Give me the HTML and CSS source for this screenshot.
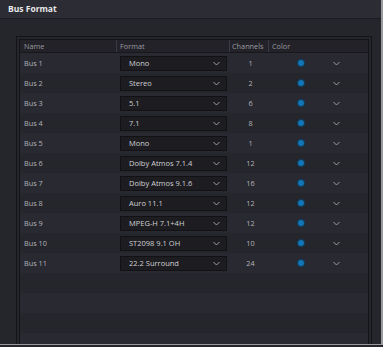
FILE: index.html
```html
<!DOCTYPE html>
<html lang="en">
<head>
    <meta charset="UTF-8">
    <title>Bus Format</title>
    <link rel="stylesheet" href="styles.css">
</head>
<body>
    <div class="window">
        <div class="title-bar">Bus Format</div>
        <div class="content">
            <div class="panel">
                <div class="table">
                    <div class="row header">
                        <div class="cell name">Name</div>
                        <div class="cell format">Format</div>
                        <div class="cell channels">Channels</div>
                        <div class="cell color">Color</div>
                    </div>
                    <div id="rows"></div>
                </div>
            </div>
        </div>
    </div>

    <script>
        const buses = [
            ['Bus 1', 'Mono', 1],
            ['Bus 2', 'Stereo', 2],
            ['Bus 3', '5.1', 6],
            ['Bus 4', '7.1', 8],
            ['Bus 5', 'Mono', 1],
            ['Bus 6', 'Dolby Atmos 7.1.4', 12],
            ['Bus 7', 'Dolby Atmos 9.1.6', 16],
            ['Bus 8', 'Auro 11.1', 12],
            ['Bus 9', 'MPEG-H 7.1+4H', 12],
            ['Bus 10', 'ST2098 9.1 OH', 10],
            ['Bus 11', '22.2 Surround', 24]
        ];

        const chevron = '<svg class="chev" width="7" height="5" viewBox="0 0 7 5"><path d="M0.5 1 L3.5 4 L6.5 1" fill="none" stroke="currentColor" stroke-width="1"/></svg>';

        const rows = document.getElementById('rows');
        let html = '';
        buses.forEach(([name, format, ch]) => {
            html += '<div class="row">' +
                '<div class="cell name">' + name + '</div>' +
                '<div class="cell format"><div class="select"><span>' + format + '</span>' + chevron + '</div></div>' +
                '<div class="cell channels">' + ch + '</div>' +
                '<div class="cell color"><span class="dot"></span></div>' +
                '<div class="cell more">' + chevron + '</div>' +
                '</div>';
        });
        for (let i = 0; i < 4; i++) {
            html += '<div class="row empty"></div>';
        }
        rows.innerHTML = html;
    </script>
</body>
</html>
```

FILE: styles.css
```css
body {
    margin: 0;
    background: #25252c;
    font-family: "Open Sans", "DejaVu Sans", sans-serif;
    color: #b4b4b8;
}

.window {
    display: flex;
    flex-direction: column;
    width: 381px;
    height: 344px;
    border-right: 2px solid #9a9a9e;
    border-bottom: 1px solid #9a9a9e;
    background: #25252c;
    overflow: hidden;
}

.title-bar {
    flex: none;
    height: 18px;
    line-height: 18px;
    padding-left: 8px;
    background: #2c2c34;
    border-bottom: 1px solid #1c1c20;
    color: #e8e8ea;
    font-size: 8.5px;
    font-weight: 700;
}

.content {
    flex: 1;
    display: flex;
    min-height: 0;
    padding: 17px 9px 0 16px;
}

.panel {
    flex: 1;
    display: flex;
    border: 1px solid #141418;
    border-bottom: none;
    padding: 2px 2px 0;
}

.table {
    flex: 1;
    border: 1px solid #141418;
    border-bottom: none;
    background: #28282f;
    overflow: hidden;
}

.row {
    display: flex;
    align-items: center;
    height: 20px;
    font-size: 7.3px;
}

.row:nth-child(odd) {
    background: #292931;
}

.row:nth-child(even) {
    background: #25252c;
}

.row.header {
    height: 12px;
    background: #222228;
    border-bottom: 1px solid #18181c;
    color: #9c9ca2;
}

.row.header .cell {
    height: 12px;
    line-height: 12px;
    border-right: 1px solid #3a3a42;
}

.row.header .color {
    border-right: none;
}

.cell {
    box-sizing: border-box;
}

.name {
    width: 97px;
    padding-left: 4px;
}

.format {
    width: 113px;
    padding-left: 3px;
}

.channels {
    width: 39px;
    padding-left: 2px;
    text-align: center;
}

.row.header .channels {
    text-align: left;
}

.color {
    width: 60px;
    padding-left: 3px;
}

.select {
    display: flex;
    align-items: center;
    justify-content: space-between;
    width: 107px;
    height: 15px;
    box-sizing: border-box;
    padding: 0 6px 0 8px;
    background: #1d1d21;
    border: 1px solid #121214;
    color: #d0d0d4;
    font-size: 7.5px;
}

.chev {
    color: #9c9ca2;
    display: block;
}

.row .color .dot {
    display: block;
    width: 6px;
    height: 6px;
    border-radius: 50%;
    background: #1477b8;
    border: 1px solid #0b3d60;
    margin-left: 25px;
}

.more {
    width: 20px;
    padding-left: 4px;
}
```
